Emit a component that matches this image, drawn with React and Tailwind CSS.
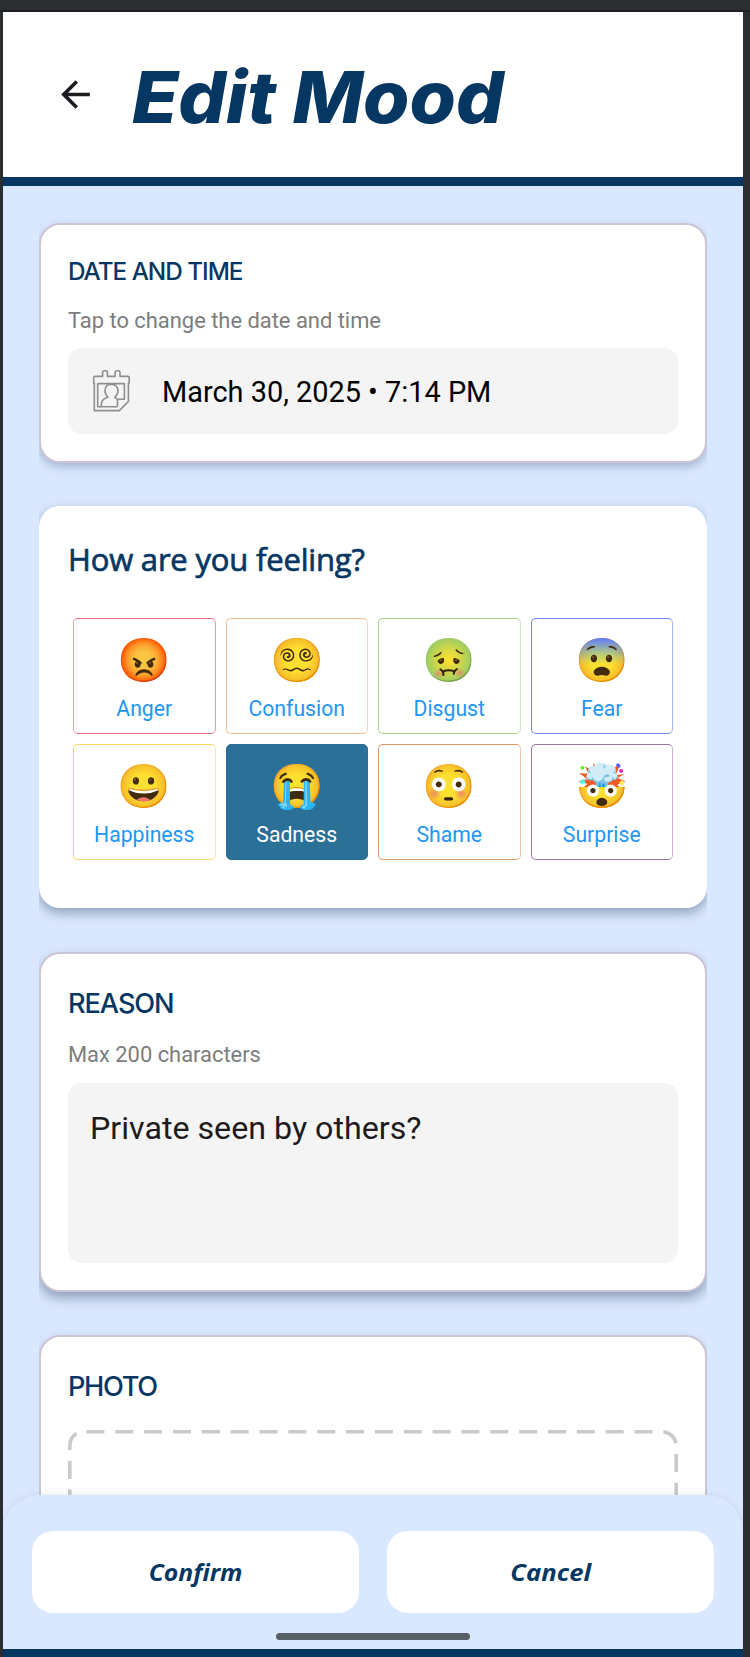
const moods = [
  { name: "Anger", emoji: "😡", border: "border-[#ee6b7b] border-x-[#f39aa5]" },
  { name: "Confusion", emoji: "😵‍💫", border: "border-[#f5bd8e] border-r-[#f9d3b4]" },
  { name: "Disgust", emoji: "🤢", border: "border-[#a9d08f] border-r-[#d3e8c5]" },
  { name: "Fear", emoji: "😨", border: "border-[#6f86f2] border-r-[#a9b7f8]" },
  { name: "Happiness", emoji: "😀", border: "border-[#fbd765] border-r-[#fce8a4]" },
  { name: "Sadness", emoji: "😭", border: "border-[#2b7097]", selected: true },
  { name: "Shame", emoji: "😳", border: "border-[#dc9a6b] border-r-[#ecc6a9]" },
  { name: "Surprise", emoji: "🤯", border: "border-[#9c75a3] border-r-[#c9b1cd]" },
];

const actions = [
  { label: "Confirm", stretch: "scale-x-[1.03]" },
  { label: "Cancel", stretch: "scale-x-[1.07]" },
];

const capsHeading = "whitespace-nowrap font-['Inter',sans-serif] font-medium text-[#063763]";
const card = "rounded-[21px] bg-white [clip-path:inset(-12px_0px_-30px_0px)]";

export default function App() {
  return (
    <div className="flex h-[1657px] w-[750px] flex-col overflow-hidden bg-[#2a2e31] font-['Roboto',sans-serif]">
      <div className="h-3 shrink-0 border-b-2 border-[#1d1f22]" />
      <main className="relative ml-[3px] flex h-[1645px] w-[740px] flex-col bg-[#dae8ff]">
        <header className="flex h-[174px] shrink-0 items-start border-b-[9px] border-[#063763] bg-white pl-[51px]">
          <svg className="mt-[61px] size-[43px] shrink-0" viewBox="0 0 24 24" fill="#1d1b20">
            <path d="M20 11H7.83l5.59-5.59L12 4l-8 8 8 8 1.41-1.41L7.83 13H20v-2z" />
          </svg>
          <h1 className="ml-[35px] mt-[35px] origin-left scale-x-[1.041] whitespace-nowrap font-['Inter',sans-serif] text-[72px] font-extrabold italic leading-[100px] text-[#063763]">
            Edit Mood
          </h1>
        </header>
        <div className="flex min-h-0 grow flex-col overflow-hidden px-9 pt-[37px]">
          <section className={`${card} h-[240px] shrink-0 border-2 border-[#cdc5d3] px-[27px] pt-[30px] shadow-[0_4px_10px_rgba(70,90,120,0.35)]`}>
            <h2 className={`${capsHeading} text-[24.3px] leading-8 tracking-[-0.042em]`}>DATE AND TIME</h2>
            <p className="mt-[20px] text-[21.9px] leading-7 text-[#7d7d7d]">Tap to change the date and time</p>
            <div className="mt-[13px] flex h-[86px] items-center rounded-[14px] bg-[#f4f4f4] text-[28.9px] text-black">
              <svg className="ml-6 h-[44px] w-[40px]" viewBox="0 0 40 44" fill="none" stroke="#8e8e8e" strokeWidth="1.6" strokeLinejoin="round">
                <path d="M3 7.400H10.600V3.600Q10.600 1.700 12.300 1.700H13.700Q15.400 1.700 15.400 3.600V7.400H23.200V3.600Q23.200 1.700 24.900 1.700H26.300Q28 1.700 28 3.600V7.400H36Q37.300 7.400 37.200 9V14.300H36.400V32.500L27.300 41.600H2.300V14.300H1.700V9Q1.700 7.400 3 7.400Z" />
                <path d="M25.500 37.700H5.700V14.600H32.400V30.300H26.200" />
                <path d="M9.200 37.500Q8.800 29.800 16 28.300Q13 25.600 13 21.500Q13.300 15.200 19.400 15.200Q25.700 15.400 26 21.800Q25.900 25.600 22.800 28.300L25.500 30.300V37.500" />
              </svg>
              <span className="ml-[30px] mt-[3px]">March 30, 2025 • 7:14 PM</span>
            </div>
          </section>
          <section className={`${card} mt-[43px] h-[402px] shrink-0 px-[29px] pt-[33px] shadow-[0_5px_12px_rgba(70,90,120,0.5)]`}>
            <h2 className="whitespace-nowrap font-['Open_Sans',sans-serif] text-[31px] font-medium leading-10 tracking-[-0.006em] text-[#063763] [-webkit-text-stroke:0.7px_#063763]">
              How are you feeling?
            </h2>
            <div className="ml-[5px] mt-[39px] grid w-[600px] grid-cols-4 gap-[10px]">
              {moods.map((m) => (
                <button key={m.name} className={`flex h-[116px] flex-col items-center rounded-[5px] border ${m.border} ${m.selected ? "bg-[#2b7097] text-white" : "text-[#2196f3]"}`}>
                  <span className="mt-[17px] h-12 text-[43px] leading-[48px]">{m.emoji}</span>
                  <span className="mt-[11px] text-[21.2px] leading-7">{m.name}</span>
                </button>
              ))}
            </div>
          </section>
          <section className={`${card} mt-[44px] h-[340px] shrink-0 border-2 border-[#cdc5d3] px-[27px] pt-8 shadow-[0_6px_12px_rgba(70,90,120,0.5)]`}>
            <h2 className={`${capsHeading} text-[27.2px] leading-9 tracking-[-0.04em]`}>REASON</h2>
            <p className="mt-[19px] text-[21.9px] leading-7 text-[#7d7d7d]">Max 200 characters</p>
            <div className="mt-[14px] h-[180px] rounded-[14px] bg-[#f4f4f4] px-[22px] pt-[25px] text-[32.2px] leading-10 text-[#1d1b20]">
              Private seen by others?
            </div>
          </section>
          <section className={`${card} mt-[43px] h-[340px] shrink-0 border-2 border-[#cdc5d3] px-[27px] pt-8 shadow-[0_4px_10px_rgba(70,90,120,0.35)]`}>
            <h2 className={`${capsHeading} text-[27.2px] leading-9 tracking-[-0.05em]`}>PHOTO</h2>
            <svg className="mt-[25px] h-[200px] w-[610px]" viewBox="0 0 610 200" fill="none" stroke="#cacaca" strokeWidth="3.6">
              <path d="M18.400 1.800H594A14 14 0 0 1 608.200 16V200" strokeDasharray="18 10.85" />
              <path d="M8.500 3.700Q1.800 7 1.800 16V20M1.800 31v18M1.800 59.500v18" />
            </svg>
          </section>
        </div>
        <footer className="absolute bottom-0 left-0 flex h-[162px] w-full flex-col rounded-t-[37px] border-b-8 border-[#063763] bg-[#dae8ff] px-[29px] pt-9 shadow-[0_0_8px_rgba(70,90,120,0.14)] [clip-path:inset(-12px_0px_0px_0px)]">
          <div className="flex gap-7">
            {actions.map((a) => (
              <button key={a.label} className="flex h-[82px] w-[327px] items-center justify-center rounded-[21px] bg-white font-['Open_Sans',sans-serif] text-[24px] font-bold italic text-[#063763]">
                <span className={a.stretch}>{a.label}</span>
              </button>
            ))}
          </div>
          <div className="ml-[244px] mt-5 h-[7px] w-[194px] rounded-full bg-[#586067]" />
        </footer>
      </main>
    </div>
  );
}
